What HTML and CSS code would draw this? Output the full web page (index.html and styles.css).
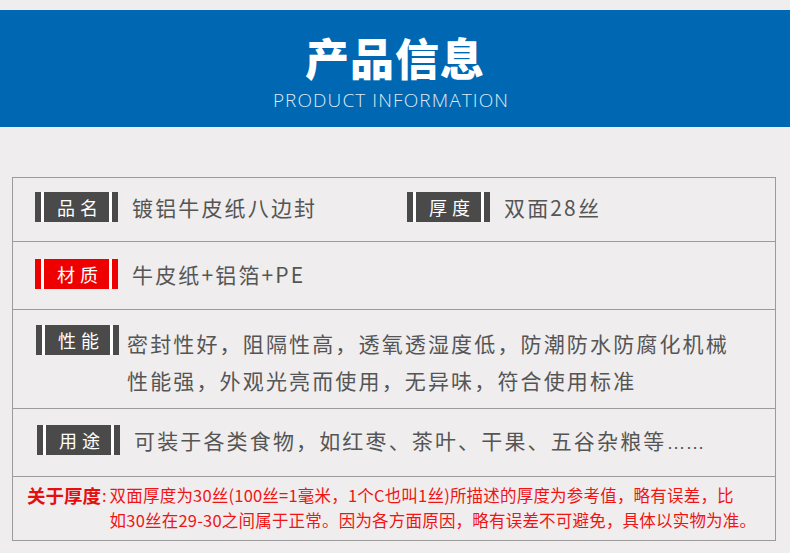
FILE: index.html
```html
<!DOCTYPE html>
<html lang="zh-CN">
<head>
<meta charset="utf-8">
<title>产品信息</title>
<link rel="stylesheet" href="styles.css">
</head>
<body>
<div class="page">
  <header class="banner">
    <h1 class="banner-title">产品信息</h1>
    <p class="banner-sub">PRODUCT INFORMATION</p>
  </header>

  <section class="table">
    <div class="row row-name">
      <div class="cell cell-first">
        <span class="badge"><span class="badge-text">品名</span></span>
        <span class="value">镀铝牛皮纸八边封</span>
      </div>
      <div class="cell">
        <span class="badge"><span class="badge-text">厚度</span></span>
        <span class="value">双面28丝</span>
      </div>
    </div>

    <div class="row row-material">
      <div class="cell">
        <span class="badge badge-red"><span class="badge-text">材质</span></span>
        <span class="value">牛皮纸+铝箔+PE</span>
      </div>
    </div>

    <div class="row row-perf">
      <div class="cell">
        <span class="badge badge-tight"><span class="badge-text">性能</span></span>
        <span class="value value-multi">密封性好，阻隔性高，透氧透湿度低，防潮防水防腐化机械<br>性能强，外观光亮而使用，无异味，符合使用标准</span>
      </div>
    </div>

    <div class="row row-use">
      <div class="cell">
        <span class="badge"><span class="badge-text">用途</span></span>
        <span class="value">可装于各类食物，如红枣、茶叶、干果、五谷杂粮等<span class="dots">……</span></span>
      </div>
    </div>

    <div class="row row-note">
      <span class="note-label">关于厚度</span><span class="note-colon">:</span>
      <p class="note-text">双面厚度为30丝(100丝=1毫米，1个C也叫1丝)所描述的厚度为参考值，略有误差，比<br>如30丝在29-30之间属于正常。因为各方面原因，略有误差不可避免，具体以实物为准。</p>
    </div>
  </section>
</div>
</body>
</html>
```

FILE: styles.css
```css
* {
  box-sizing: border-box;
}

html, body {
  margin: 0;
  padding: 0;
  background: #efedee;
}

body {
  font-family: "Noto Sans CJK SC", "Noto Sans", sans-serif;
  color: #555;
}

.page {
  width: 790px;
  height: 553px;
  padding-top: 10px;
  overflow: hidden;
}

.banner {
  height: 117px;
  background: #0068b2;
  display: flex;
  flex-direction: column;
  align-items: center;
  padding-top: 24px;
}

.banner-title {
  margin: 0;
  font-size: 44px;
  line-height: 46px;
  font-weight: 900;
  color: #fff;
  letter-spacing: 1px;
}

.banner-sub {
  margin: 10px 8px 0 0;
  font-family: "Open Sans", "Liberation Sans", sans-serif;
  font-weight: 300;
  font-size: 19px;
  line-height: 20px;
  letter-spacing: 1.1px;
  color: #dfe9f3;
}

.table {
  margin: 50px 14px 0 12px;
  border: 1px solid #9c9a9b;
}

.row {
  display: flex;
  align-items: flex-start;
  padding-left: 22px;
  border-bottom: 1px solid #9c9a9b;
}

.row-name {
  height: 64px;
  padding-top: 14px;
}

.row-material {
  height: 68px;
  padding-top: 17px;
}

.row-perf {
  height: 99px;
  padding-top: 15px;
  padding-left: 23px;
}

.row-use {
  height: 68px;
  padding-top: 16px;
  padding-left: 24px;
}

.row-note {
  height: 63px;
  border-bottom: none;
  padding-top: 6px;
  padding-left: 14px;
  color: #f01414;
  font-size: 16.5px;
  line-height: 25px;
}

.cell {
  display: flex;
  align-items: flex-start;
}

.cell-first {
  width: 372px;
}

.badge {
  display: flex;
  height: 30px;
  padding: 0 6px;
  background: #4a4a4a;
  margin-right: 14px;
  flex-shrink: 0;
}

.badge-text {
  display: block;
  width: 71px;
  height: 30px;
  border-left: 3px solid #fff;
  border-right: 3px solid #fff;
  background: #4a4a4a;
  color: #fff;
  font-size: 18px;
  line-height: 30px;
  letter-spacing: 5px;
  text-indent: 7px;
  text-align: center;
}

.badge-red,
.badge-red .badge-text {
  background: #ee0000;
}

.badge-tight {
  margin-right: 8px;
}

.value {
  font-size: 21px;
  line-height: 30px;
  letter-spacing: 2.15px;
  color: #555;
  white-space: nowrap;
}

.value-multi {
  line-height: 37px;
}

.dots {
  font-family: "Liberation Sans", sans-serif;
  font-size: 19px;
  letter-spacing: 0;
}

.note-label {
  font-weight: 700;
  font-size: 18.5px;
  color: #e60f0f;
  white-space: nowrap;
}

.note-colon {
  padding: 0 3px 0 1px;
}

.note-text {
  margin: 0;
  white-space: nowrap;
  letter-spacing: 0.2px;
}
```
